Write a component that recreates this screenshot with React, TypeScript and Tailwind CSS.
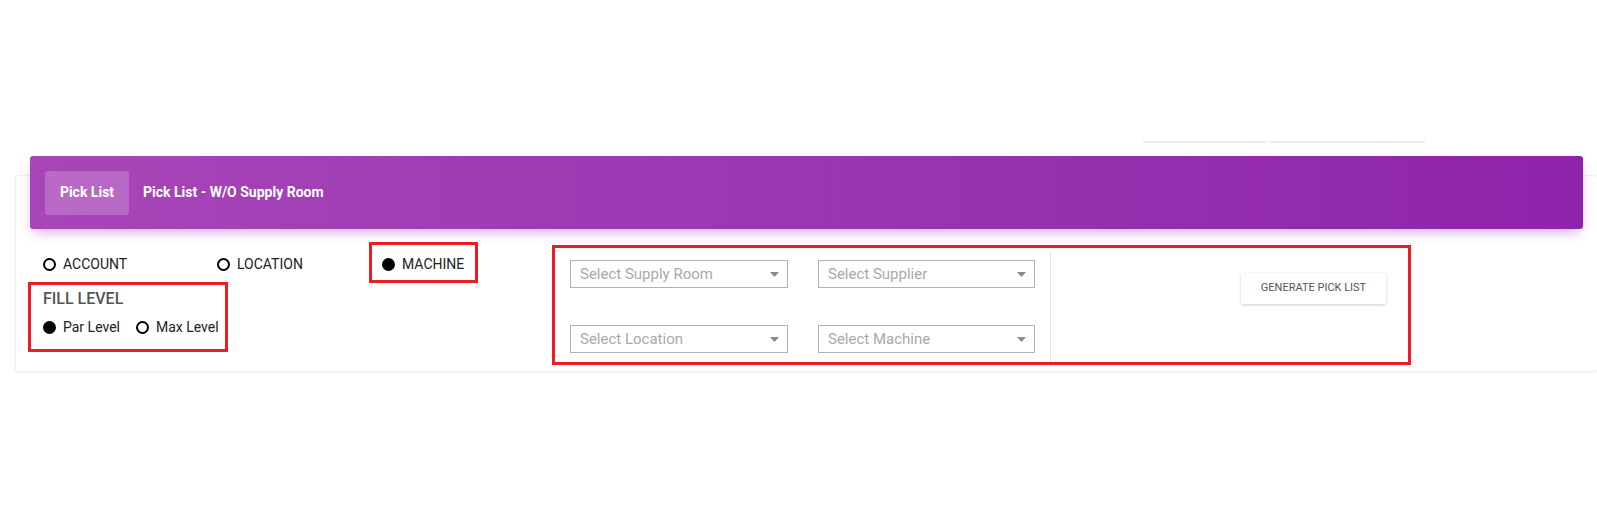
import { useState } from "react"

type RadioProps = {
  label: string
  checked: boolean
  onSelect: () => void
  className?: string
}

const Radio = ({ label, checked, onSelect, className = "" }: RadioProps) => (
  <button
    type="button"
    onClick={onSelect}
    className={`flex items-center h-5 text-[14px] text-[#222] ${className}`}
  >
    {checked ? (
      <span className="w-[13px] h-[13px] rounded-full bg-black" />
    ) : (
      <span className="w-[13px] h-[13px] rounded-full border-2 border-black" />
    )}
    <span className="ml-[7px]">{label}</span>
  </button>
)

const Select = ({ placeholder, width }: { placeholder: string; width: string }) => (
  <div
    className={`${width} h-[28px] border border-[#b3b3b3] flex items-center justify-between pl-[9px] pr-[8px] text-[15px] text-[#a9a9a9] bg-white`}
  >
    <span>{placeholder}</span>
    <svg width="9" height="5" viewBox="0 0 9 5">
      <path d="M0 0h9L4.5 5z" fill="#8a8a8a" />
    </svg>
  </div>
)

export default function App() {
  const [mode, setMode] = useState("machine")
  const [fill, setFill] = useState("par")

  return (
    <div className="relative w-[1597px] h-[513px] bg-white overflow-hidden font-['Roboto','Liberation_Sans',sans-serif]">
      {/* tab strip remnants above the card */}
      <div className="flex pt-[141px] pl-[1143px] gap-[3px] h-[175px]">
        <div className="w-[123px] h-[2px] bg-[#ececec]" />
        <div className="w-[156px] h-[2px] bg-[#ececec]" />
      </div>

      {/* card */}
      <div className="ml-[15px] w-[1583px] h-[197px] bg-white rounded-[4px] border border-[#f0f0f0] shadow-[0_1px_3px_rgba(0,0,0,0.06)]">
        <div className="-mt-[20px] mx-[14px] h-[73px] rounded-[3px] bg-gradient-to-r from-[#a845b8] to-[#8e24aa] shadow-[0_6px_12px_-4px_rgba(142,36,170,0.45)] flex items-center px-[15px]">
          <div className="h-[44px] w-[84px] rounded-[3px] bg-white/20 flex items-center justify-center text-white font-bold text-[14px]">
            Pick List
          </div>
          <div className="ml-[14px] text-white font-bold text-[14px]">Pick List - W/O Supply Room</div>
        </div>

        <div className="flex pt-[25px]">
          {/* report type + fill level */}
          <div className="w-[554px] pl-[27px]">
            <div className="flex">
              <Radio label="ACCOUNT" checked={mode === "account"} onSelect={() => setMode("account")} className="w-[174px]" />
              <Radio label="LOCATION" checked={mode === "location"} onSelect={() => setMode("location")} className="w-[165px]" />
              <Radio label="MACHINE" checked={mode === "machine"} onSelect={() => setMode("machine")} />
            </div>
            <div className="mt-[15px] text-[16px] leading-5 font-medium text-[#555]">FILL LEVEL</div>
            <div className="flex mt-[8px] gap-[16px]">
              <Radio label="Par Level" checked={fill === "par"} onSelect={() => setFill("par")} />
              <Radio label="Max Level" checked={fill === "max"} onSelect={() => setFill("max")} />
            </div>
          </div>

          {/* filters */}
          <div className="grid grid-cols-[218px_217px] gap-x-[30px] gap-y-[37px] pt-[6px] content-start">
            <Select placeholder="Select Supply Room" width="w-[218px]" />
            <Select placeholder="Select Supplier" width="w-[217px]" />
            <Select placeholder="Select Location" width="w-[218px]" />
            <Select placeholder="Select Machine" width="w-[217px]" />
          </div>

          <div className="ml-[15px] -mt-[2px] w-px h-[110px] bg-[#e4e4e4]" />

          <div className="pl-[190px] pt-[19px]">
            <button
              type="button"
              className="w-[145px] h-[31px] rounded-[2px] bg-white text-[11px] text-[#555] uppercase shadow-[0_1px_3px_rgba(0,0,0,0.2)]"
            >
              Generate Pick List
            </button>
          </div>
        </div>
      </div>

      {/* highlight boxes */}
      <div className="absolute left-[28px] top-[282px] w-[200px] h-[70px] border-[3px] border-[#ed1c24]" />
      <div className="absolute left-[369px] top-[242px] w-[109px] h-[41px] border-[3px] border-[#ed1c24]" />
      <div className="absolute left-[552px] top-[245px] w-[859px] h-[120px] border-[3px] border-[#ed1c24]" />
    </div>
  )
}
